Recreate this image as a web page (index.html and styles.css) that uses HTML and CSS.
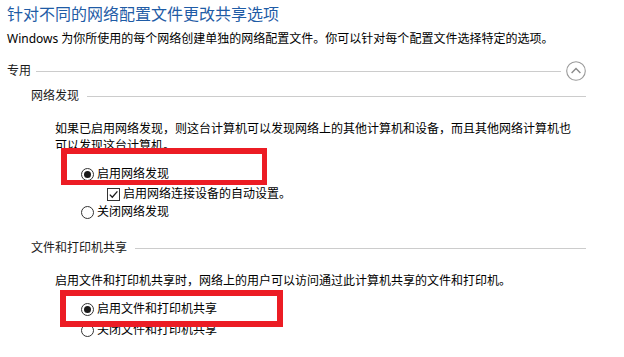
FILE: index.html
```html
<!DOCTYPE html>
<html lang="zh-CN">
<head>
<meta charset="utf-8">
<title>高级共享设置</title>
<link rel="stylesheet" href="styles.css">
</head>
<body>
<div class="page">
  <h1 class="title">针对不同的网络配置文件更改共享选项</h1>
  <p class="desc">Windows 为你所使用的每个网络创建单独的网络配置文件。你可以针对每个配置文件选择特定的选项。</p>

  <div class="profile-head">
    <span class="profile-name">专用</span>
    <span class="rule"></span>
    <span class="collapse-btn">
      <svg width="20" height="20" viewBox="0 0 20 20">
        <circle cx="10" cy="10" r="9.3" fill="none" stroke="#9a9a9a" stroke-width="1.1"/>
        <polyline points="5.6,12 10,7.6 14.4,12" fill="none" stroke="#8a8a8a" stroke-width="1.4"/>
      </svg>
    </span>
  </div>

  <div class="group">
    <div class="group-head"><span class="group-name">网络发现</span><span class="rule"></span></div>
    <p class="group-text">如果已启用网络发现，则这台计算机可以发现网络上的其他计算机和设备，而且其他网络计算机也可以发现这台计算机。</p>
    <div class="options">
      <div class="option"><span class="radio checked"></span>启用网络发现<span class="mark mark-discovery"></span></div>
      <div class="option sub"><span class="checkbox"><svg width="11" height="11" viewBox="0 0 11 11"><polyline points="1.8,5.6 4.3,8.2 9.4,2.4" fill="none" stroke="#1a1a1a" stroke-width="1.3"/></svg></span>启用网络连接设备的自动设置。</div>
      <div class="option"><span class="radio"></span>关闭网络发现</div>
    </div>
  </div>

  <div class="group group-second">
    <div class="group-head"><span class="group-name">文件和打印机共享</span><span class="rule"></span></div>
    <p class="group-text">启用文件和打印机共享时，网络上的用户可以访问通过此计算机共享的文件和打印机。</p>
    <div class="options">
      <div class="option"><span class="radio checked"></span>启用文件和打印机共享<span class="mark mark-sharing"></span></div>
      <div class="option last"><span class="radio"></span>关闭文件和打印机共享</div>
    </div>
  </div>
</div>
</body>
</html>
```

FILE: styles.css
```css
html, body {
  margin: 0;
  background: #ffffff;
}

body {
  font-family: "Noto Sans", "Noto Sans CJK SC", sans-serif;
  color: #000000;
  overflow: hidden;
}

.page {
  padding: 4px 0 0 7px;
  width: 579px;
}

.title {
  margin: 0;
  font-size: 16px;
  line-height: 20px;
  font-weight: 400;
  color: #1f5ca6;
}

.desc {
  margin: 7px 0 0;
  font-size: 12px;
  line-height: 16px;
}

.profile-head {
  margin-top: 14px;
  height: 20px;
  display: flex;
  align-items: center;
  font-size: 12px;
  line-height: 20px;
  color: #1a1a1a;
}

.profile-name {
  margin-right: 5px;
}

.rule {
  flex: 1;
  height: 1px;
  background: #cccccc;
}

.collapse-btn {
  margin-left: 5px;
  width: 20px;
  height: 20px;
  display: flex;
}

.group {
  padding-left: 24px;
}

.group-head {
  margin-top: 7px;
  height: 16px;
  display: flex;
  align-items: center;
  font-size: 12px;
  line-height: 16px;
  color: #1a1a1a;
}

.group-second .group-head {
  margin-top: 19px;
}

.group-name {
  margin-right: 8px;
}

.group-text {
  margin: 16px 0 0 24px;
  width: 520px;
  font-size: 12px;
  line-height: 17px;
}

.options {
  margin-top: 11px;
  padding-left: 50px;
}

.option {
  position: relative;
  display: flex;
  align-items: center;
  height: 18px;
  font-size: 12px;
  line-height: 18px;
}

.option.sub {
  padding-left: 26px;
  margin-top: 2px;
}

.option.last {
  margin-top: 3px;
}

.radio {
  position: relative;
  box-sizing: border-box;
  width: 13px;
  height: 13px;
  border: 1px solid #333333;
  border-radius: 50%;
  margin-right: 3px;
  background: #ffffff;
  flex: none;
}

.radio.checked::after {
  content: "";
  position: absolute;
  left: 2px;
  top: 2px;
  width: 7px;
  height: 7px;
  border-radius: 50%;
  background: #1a1a1a;
}

.checkbox {
  box-sizing: border-box;
  width: 13px;
  height: 13px;
  border: 1px solid #333333;
  margin-right: 3px;
  display: flex;
  align-items: center;
  justify-content: center;
  flex: none;
}

.mark {
  position: absolute;
  box-sizing: border-box;
  border: 6px solid #ec1c24;
  z-index: 2;
}

.mark-discovery {
  left: -20px;
  top: -17px;
  width: 206px;
  height: 37px;
  border-right-width: 5px;
  border-bottom-width: 5px;
}

.mark-sharing {
  left: -21px;
  top: -10px;
  width: 223px;
  height: 37px;
}
```
